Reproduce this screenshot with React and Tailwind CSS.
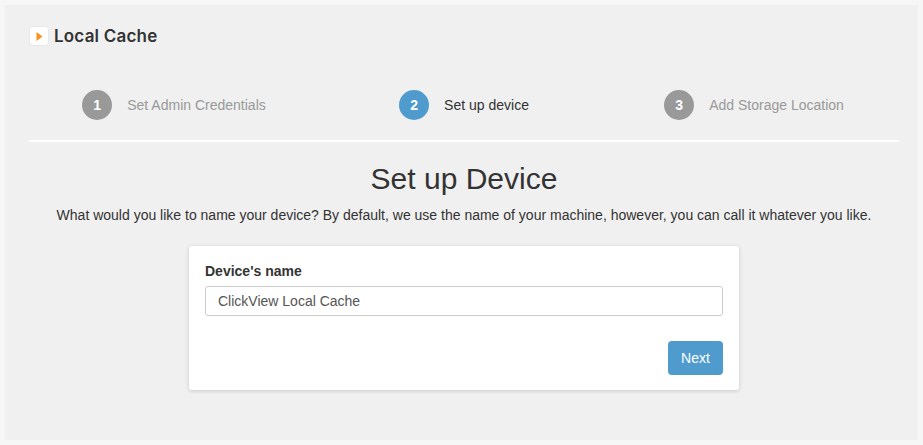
const font = { fontFamily: '"Liberation Sans", Arial, sans-serif' }

const steps = [
  { n: 1, label: 'Set Admin Credentials' },
  { n: 2, label: 'Set up device', active: true },
  { n: 3, label: 'Add Storage Location' },
]

function Logo() {
  return (
    <div className="flex items-center gap-[5px] h-5">
      <div className="w-5 h-5 rounded-[4px] bg-white border border-[#e8e8e8] flex items-center justify-center">
        <svg width="7" height="9" viewBox="0 0 7 9"><path d="M0.5 0 L6.5 4.5 L0.5 9 Z" fill="#f7931e" /></svg>
      </div>
      <span className="text-[17px] font-semibold text-[#333] tracking-[0.2px] leading-5 font-['Inter',sans-serif]">Local Cache</span>
    </div>
  )
}

function Step({ n, label, active }) {
  return (
    <div className="flex items-center justify-center gap-[15px]">
      <div className={`w-[30px] h-[30px] rounded-full flex items-center justify-center text-white text-sm font-bold ${active ? 'bg-[#4f9bcd]' : 'bg-[#999]'}`}>{n}</div>
      <span className={`text-sm ${active ? 'text-[#333]' : 'text-[#999]'}`}>{label}</span>
    </div>
  )
}

export default function App() {
  return (
    <div style={font} className="h-screen bg-[#f6f6f6] p-[5px]">
      <div className="h-full bg-[#f0f0f0] pl-6 pr-[19px] pt-[21px]">
        <Logo />
        <div className="grid grid-cols-3 mt-[44px] pb-5 border-b-2 border-white">
          {steps.map((s) => <Step key={s.n} {...s} />)}
        </div>
        <h1 className="mt-[17px] text-center text-[30px] leading-[40px] text-[#333]">Set up Device</h1>
        <p className="mt-[6px] text-center text-sm leading-5 text-[#333]">What would you like to name your device? By default, we use the name of your machine, however, you can call it whatever you like.</p>
        <div className="w-[550px] mx-auto mt-[21px] bg-white rounded-[3px] shadow-[0_1px_4px_rgba(0,0,0,0.16)] px-4 pt-[15px] pb-[15px]">
          <label className="block text-sm leading-5 font-bold text-[#333]">Device's name</label>
          <input
            readOnly
            value="ClickView Local Cache"
            className="block w-full h-[30px] mt-[5px] px-3 text-sm text-[#555] bg-white border border-[#ccc] rounded-[3px] outline-none"
          />
          <div className="flex justify-end mt-[25px]">
            <button className="w-[55px] h-[34px] bg-[#4f9bcd] rounded-[4px] text-white text-sm">Next</button>
          </div>
        </div>
      </div>
    </div>
  )
}
